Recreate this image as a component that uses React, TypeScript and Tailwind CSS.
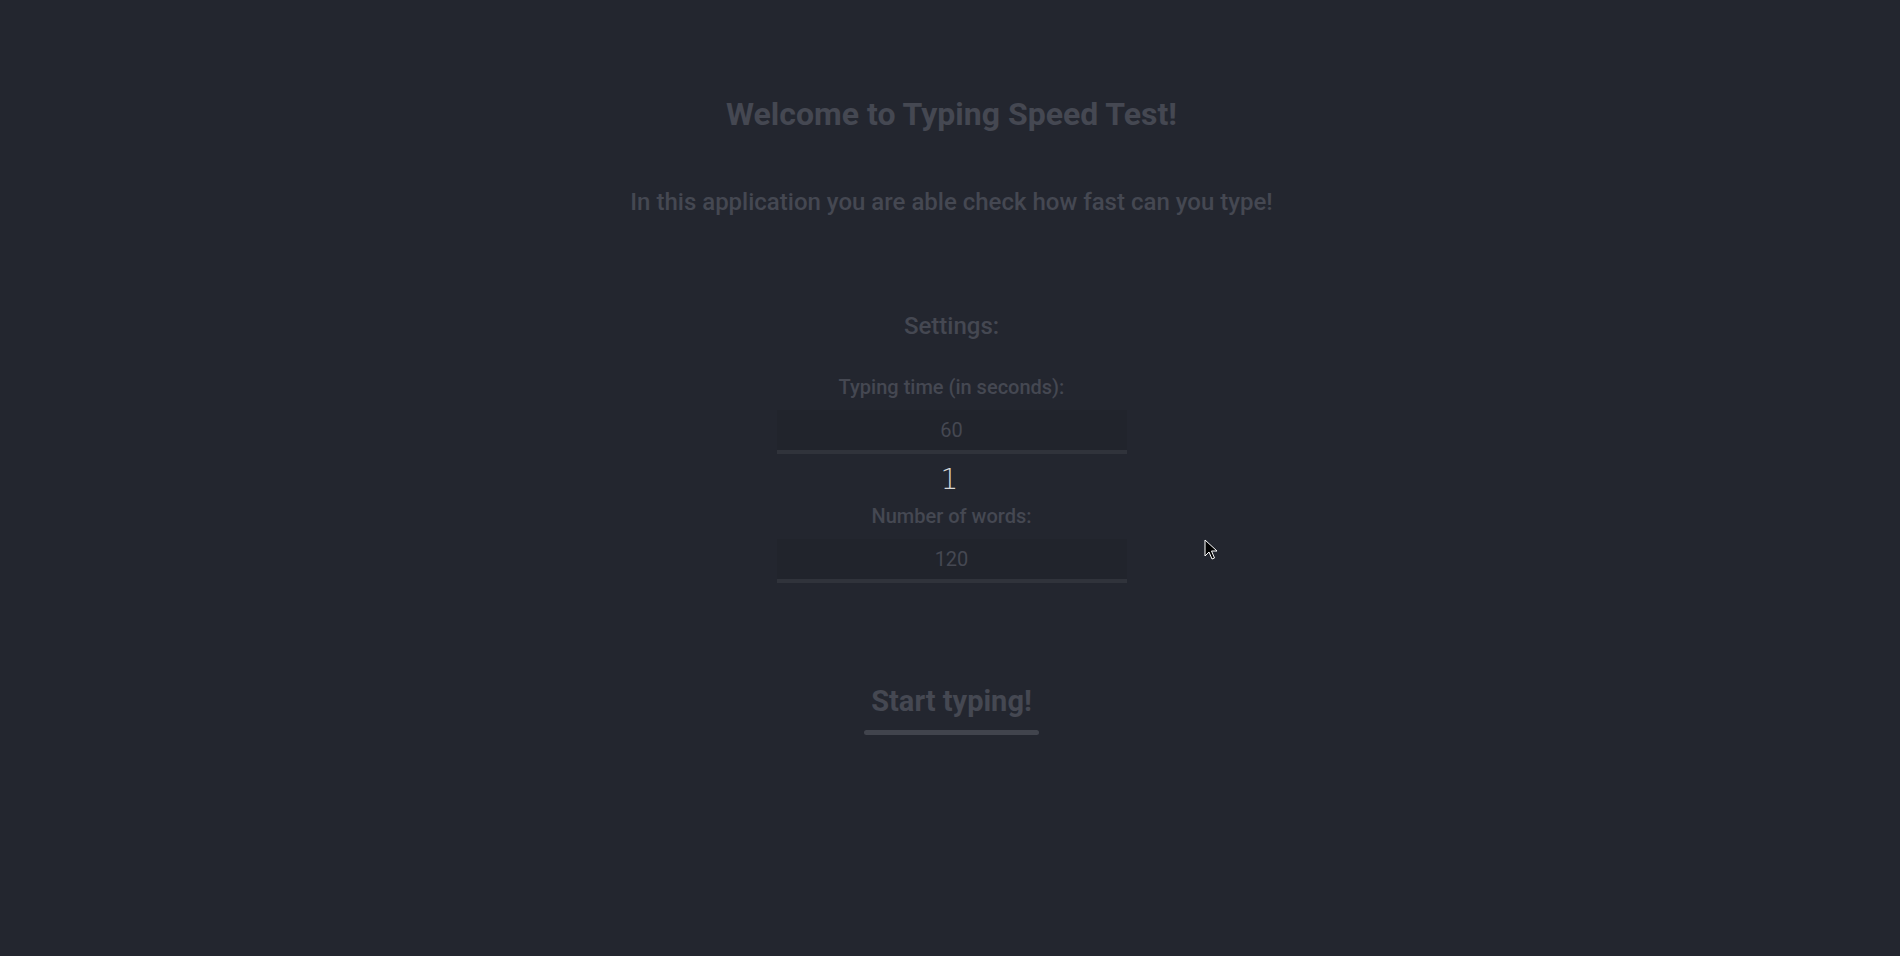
import React from "react";

function SettingInput({ label, value }: { label: string; value: string }) {
  return (
    <div className="flex flex-col items-center">
      <label className="text-[20px] font-medium leading-none text-[#454852]">{label}</label>
      <div className="mt-[13px] flex h-[44px] w-[350px] items-center justify-center border-b-4 border-[#30333b] bg-[#21242c] text-[20px] text-[#454852]">
        {value}
      </div>
    </div>
  );
}

function Cursor() {
  return (
    <svg className="absolute left-[1204px] top-[539px]" width="14" height="22" viewBox="0 0 14 22">
      <path d="M1 1 L1 17 L5 13 L8 20 L10.5 19 L7.5 12 L13 12 Z" fill="#000" stroke="#fff" strokeWidth="1" />
    </svg>
  );
}

export default function App() {
  return (
    <div className="relative min-h-[956px] w-full bg-[#23262f] font-['Roboto',sans-serif]">
      <div className="flex flex-col items-center pl-[3px] pt-[98px]">
        <h1 className="text-[32px] font-bold leading-none text-[#454852]">Welcome to Typing Speed Test!</h1>
        <p className="mt-[60px] text-[24px] font-medium leading-none text-[#454852]">
          In this application you are able check how fast can you type!
        </p>

        <h2 className="mt-[100px] text-[24px] font-medium leading-none text-[#454852]">Settings:</h2>

        <div className="mt-[39px]">
          <SettingInput label="Typing time (in seconds):" value="60" />
        </div>
        <div className="mr-[4px] mt-[12px] font-['DejaVu_Sans',sans-serif] text-[28px] font-light leading-none text-[#d6d6d6]">1</div>
        <div className="mt-[12px]">
          <SettingInput label="Number of words:" value="120" />
        </div>

        <button className="mt-[104px] flex flex-col items-center">
          <span className="text-[29px] font-bold leading-none text-[#454852]">Start typing!</span>
          <span className="mt-[14px] h-[5px] w-[175px] rounded-full bg-[#41444d]" />
        </button>
      </div>
      <Cursor />
    </div>
  );
}
